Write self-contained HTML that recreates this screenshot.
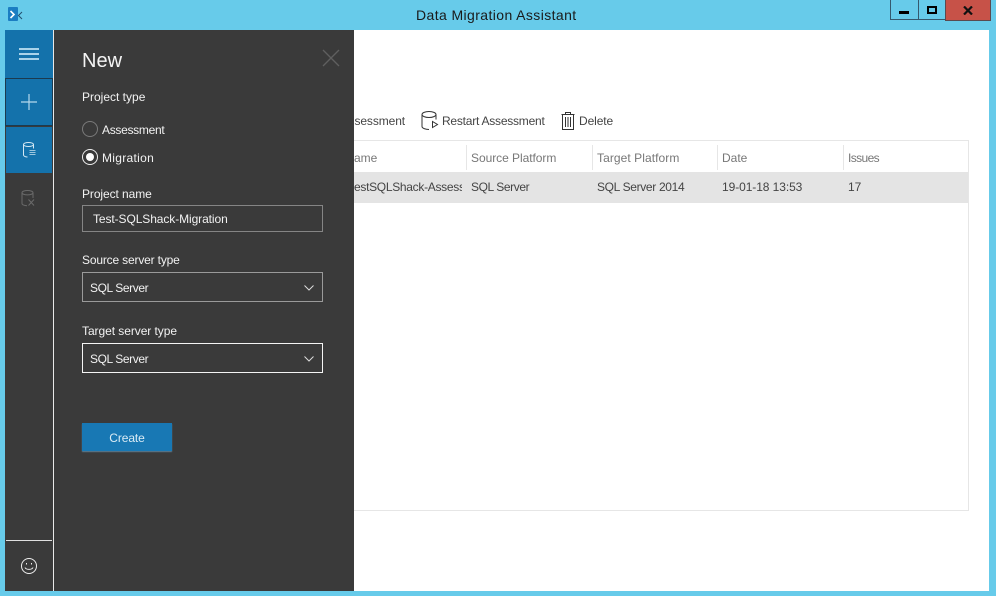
<!DOCTYPE html>
<html>
<head>
<meta charset="utf-8">
<style>
html,body{margin:0;padding:0;}
body{width:996px;height:596px;position:relative;overflow:hidden;background:#67cbea;font-family:"Liberation Sans",sans-serif;font-size:12px;}
div,span,svg{position:absolute;}
.t{white-space:nowrap;line-height:16px;}
.w{color:#f2f2f2;}
.d{color:#444;}
.h{color:#777;}
.box{box-sizing:border-box;left:82px;width:241px;background:#3a3a3a;}
</style>
</head>
<body>
<!-- title bar -->
<div class="t" style="left:416px;top:7px;font-size:14px;color:#1a1a1a;letter-spacing:0.4px;">Data Migration Assistant</div>
<svg style="left:8px;top:7px" width="16" height="16" viewBox="0 0 16 16">
<rect x="0" y="0" width="10" height="14" rx="1" fill="#1b7dc2"/>
<path d="M2.500 4l3.500 3.500-3.500 3.500" fill="none" stroke="#fff" stroke-width="1.600"/>
<path d="M14 5l-3.500 3.500 3.500 3.500" fill="none" stroke="#244f6e" stroke-width="1"/>
</svg>
<!-- window buttons -->
<div style="left:890px;top:0;width:28px;height:20px;box-sizing:border-box;border:1px solid #35596e;border-top:0;border-right:0;"></div>
<div style="left:918px;top:0;width:27px;height:20px;box-sizing:border-box;border:1px solid #35596e;border-top:0;border-right:0;"></div>
<div style="left:945px;top:0;width:46px;height:21px;box-sizing:border-box;background:#c75248;border:1px solid #5a4a50;border-top:0;"></div>
<div style="left:899px;top:11px;width:10px;height:3px;background:#000;"></div>
<div style="left:927px;top:6px;width:10px;height:8px;box-sizing:border-box;border:2px solid #000;"></div>
<svg style="left:963px;top:6px" width="10" height="9" viewBox="0 0 10 9"><path d="M1 0.500l8 8M9 0.500l-8 8" stroke="#111" stroke-width="2.200" fill="none"/></svg>

<!-- content -->
<div style="left:5px;top:30px;width:984px;height:561px;background:#fff;"></div>

<!-- toolbar -->
<div class="t d" style="left:354px;top:113px;width:51px;overflow:hidden;direction:rtl;letter-spacing:-0.1px;">ssessment</div>
<svg style="left:421px;top:111px" width="18" height="19" viewBox="0 0 18 19" fill="none" stroke="#333" stroke-width="1">
<ellipse cx="8" cy="3.500" rx="7" ry="3"/>
<path d="M1 3.500v12c0 1.700 3.500 3 7 3M15 3.500v5"/>
<path d="M11.500 10.500v6l5-3z"/>
</svg>
<div class="t d" style="left:442px;top:113px;letter-spacing:-0.23px;">Restart Assessment</div>
<svg style="left:560px;top:111px" width="16" height="19" viewBox="0 0 16 19" fill="none" stroke="#333" stroke-width="1">
<path d="M1.500 3.500h13M5.500 3.500v-2h5v2M2.500 3.500v15h11v-15M5.500 6v10M8 6v10M10.500 6v10"/>
</svg>
<div class="t d" style="left:579px;top:113px;letter-spacing:-0.1px;">Delete</div>

<!-- table -->
<div style="left:300px;top:140px;width:669px;height:371px;box-sizing:border-box;border:1px solid #e6e6e6;"></div>
<div style="left:300px;top:172px;width:668px;height:31px;background:#e4e4e4;"></div>
<div style="left:466px;top:145px;width:1px;height:25px;background:#e6e6e6;"></div>
<div style="left:592px;top:145px;width:1px;height:25px;background:#e6e6e6;"></div>
<div style="left:717px;top:145px;width:1px;height:25px;background:#e6e6e6;"></div>
<div style="left:843px;top:145px;width:1px;height:25px;background:#e6e6e6;"></div>
<div class="t h" style="left:354px;top:150px;">ame</div>
<div class="t h" style="left:471px;top:150px;letter-spacing:-0.05px;">Source Platform</div>
<div class="t h" style="left:597px;top:150px;letter-spacing:0.07px;">Target Platform</div>
<div class="t h" style="left:722px;top:150px;">Date</div>
<div class="t h" style="left:848px;top:150px;letter-spacing:-0.6px;">Issues</div>
<div class="t d" style="left:354px;top:179px;width:108px;overflow:hidden;letter-spacing:-0.3px;">estSQLShack-Assessment</div>
<div class="t d" style="left:471px;top:179px;letter-spacing:-0.4px;">SQL Server</div>
<div class="t d" style="left:597px;top:179px;letter-spacing:-0.33px;">SQL Server 2014</div>
<div class="t d" style="left:722px;top:179px;letter-spacing:-0.08px;">19-01-18 13:53</div>
<div class="t d" style="left:848px;top:179px;">17</div>

<!-- sidebar -->
<div style="left:5px;top:30px;width:48px;height:561px;background:#3a3a3a;"></div>
<div style="left:53px;top:30px;width:1px;height:561px;background:#e8e8e8;"></div>
<div style="left:5px;top:30px;width:48px;height:48px;background:#1472ab;"></div>
<div style="left:5px;top:78px;width:48px;height:48px;box-sizing:border-box;background:#1472ab;border:1px solid #1c3a4e;"></div>
<div style="left:6px;top:127px;width:46px;height:46px;background:#1472ab;"></div>
<div style="left:19px;top:48px;width:20px;height:1px;background:#a9d3ea;box-shadow:0 1px 0 #a9d3ea;"></div>
<div style="left:19px;top:53px;width:20px;height:1px;background:#a9d3ea;box-shadow:0 1px 0 #a9d3ea;"></div>
<div style="left:19px;top:58px;width:20px;height:1px;background:#a9d3ea;box-shadow:0 1px 0 #a9d3ea;"></div>
<svg style="left:20px;top:93px" width="18" height="18" viewBox="0 0 18 18"><path d="M9 1v16M1 9h16" stroke="#b5d8ec" stroke-width="1.200" fill="none"/></svg>
<svg style="left:23px;top:142px" width="13" height="16" viewBox="0 0 13 16" fill="none" stroke="#d5e8f3" stroke-width="1">
<ellipse cx="5.500" cy="2.500" rx="5" ry="2"/>
<path d="M0.500 2.500v10.500c0 1.200 2 2 4 2M10.500 2.500v4"/>
<path d="M6.500 8.500h6M6.500 10.500h6M6.500 12.500h6" stroke="#9cc6de"/>
</svg>
<svg style="left:21px;top:190px" width="15" height="17" viewBox="0 0 15 17" fill="none" stroke="#6a6a6a" stroke-width="1">
<ellipse cx="6.500" cy="2.700" rx="5.500" ry="2.200"/>
<path d="M1 2.700v10.800c0 1.300 2.500 2.200 5 2.200M12 2.700v5.300M7.500 9.500l5.500 6M13 9.500l-5.500 6"/>
</svg>
<div style="left:6px;top:540px;width:46px;height:1px;background:#e0e0e0;"></div>
<svg style="left:20px;top:557px" width="18" height="18" viewBox="0 0 18 18" fill="none" stroke="#eee" stroke-width="1">
<circle cx="9" cy="9" r="7.500"/>
<path d="M5 10.500c1 2.500 7 2.500 8 0"/>
<path d="M6.500 6v1.500M11.500 6v1.500"/>
</svg>

<!-- panel -->
<div style="left:54px;top:30px;width:300px;height:561px;background:#3a3a3a;"></div>
<div class="t" style="left:82px;top:49px;font-size:20px;line-height:24px;color:#f4f4f4;">New</div>
<svg style="left:322px;top:49px" width="18" height="18" viewBox="0 0 18 18"><path d="M1 1l16 16M17 1l-16 16" stroke="#5f5f5f" stroke-width="1.300" fill="none"/></svg>
<div class="t w" style="left:82px;top:89px;">Project type</div>
<div style="left:82px;top:121px;width:16px;height:16px;box-sizing:border-box;border:1px solid #7a7a7a;border-radius:50%;"></div>
<div class="t w" style="left:102px;top:122px;letter-spacing:-0.3px;">Assessment</div>
<div style="left:82px;top:149px;width:16px;height:16px;box-sizing:border-box;border:1px solid #eee;border-radius:50%;"></div>
<div style="left:86px;top:153px;width:8px;height:8px;background:#fff;border-radius:50%;"></div>
<div class="t w" style="left:102px;top:150px;letter-spacing:0.3px;">Migration</div>
<div class="t w" style="left:82px;top:186px;letter-spacing:-0.08px;">Project name</div>
<div class="box" style="top:205px;height:27px;border:1px solid #858585;"></div>
<div class="t w" style="left:93px;top:211px;letter-spacing:-0.09px;">Test-SQLShack-Migration</div>
<div class="t w" style="left:82px;top:252px;letter-spacing:-0.17px;">Source server type</div>
<div class="box" style="top:272px;height:30px;border:1px solid #9a9a9a;"></div>
<div class="t w" style="left:90px;top:280px;letter-spacing:-0.4px;">SQL Server</div>
<svg style="left:304px;top:285px" width="10" height="6" viewBox="0 0 10 6"><path d="M0.500 0.500l4.500 4.500 4.500-4.500" stroke="#ddd" fill="none"/></svg>
<div class="t w" style="left:82px;top:323px;letter-spacing:-0.06px;">Target server type</div>
<div class="box" style="top:343px;height:30px;border:1px solid #f5f5f5;"></div>
<div class="t w" style="left:90px;top:351px;letter-spacing:-0.4px;">SQL Server</div>
<svg style="left:304px;top:356px" width="10" height="6" viewBox="0 0 10 6"><path d="M0.500 0.500l4.500 4.500 4.500-4.500" stroke="#ddd" fill="none"/></svg>
<div style="left:82px;top:423px;width:90px;height:28px;background:#1878b4;box-shadow:0 1px 1px #5d7f95;"></div>
<div class="t" style="left:82px;top:430px;width:90px;text-align:center;color:#d9ebf5;letter-spacing:-0.1px;">Create</div>
</body>
</html>
